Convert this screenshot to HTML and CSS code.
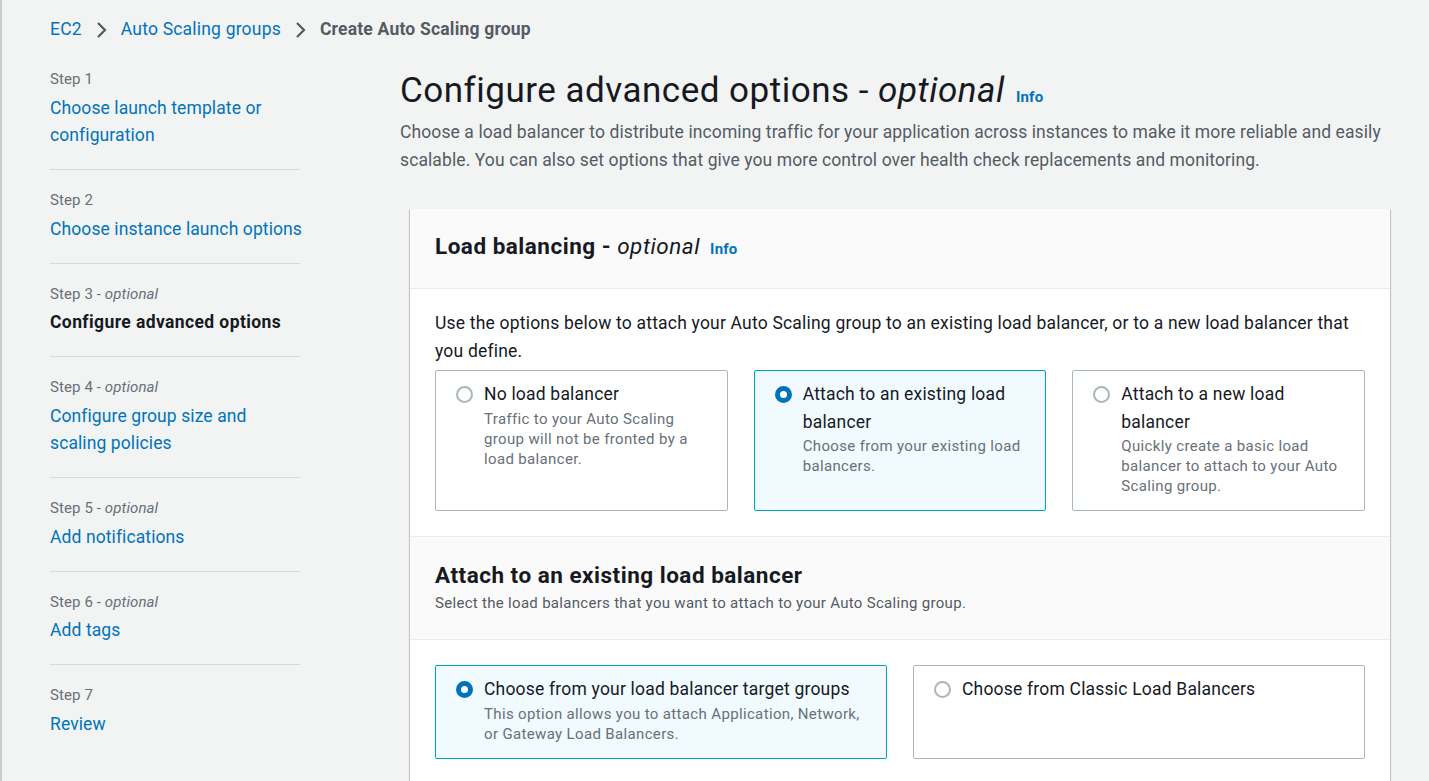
FILE: index.html
```html
<!DOCTYPE html>
<html lang="en">
<head>
<meta charset="utf-8">
<title>Create Auto Scaling group</title>
<link rel="stylesheet" href="styles.css">
</head>
<body>
<div class="page">
  <nav class="breadcrumbs">
    <a class="crumb-link" href="#">EC2</a>
    <svg class="chev" viewBox="0 0 12 18" width="12" height="18"><path d="M3 2l7 7-7 7" fill="none" stroke="#545b64" stroke-width="2.2"/></svg>
    <a class="crumb-link" href="#">Auto Scaling groups</a>
    <svg class="chev" viewBox="0 0 12 18" width="12" height="18"><path d="M3 2l7 7-7 7" fill="none" stroke="#545b64" stroke-width="2.2"/></svg>
    <span class="crumb-current">Create Auto Scaling group</span>
  </nav>

  <div class="layout">
    <ul class="steps">
      <li class="step">
        <div class="step-label">Step 1</div>
        <a class="step-link" href="#">Choose launch template or configuration</a>
      </li>
      <li class="step">
        <div class="step-label">Step 2</div>
        <a class="step-link" href="#">Choose instance launch options</a>
      </li>
      <li class="step">
        <div class="step-label">Step 3 - <i>optional</i></div>
        <span class="step-current">Configure advanced options</span>
      </li>
      <li class="step">
        <div class="step-label">Step 4 - <i>optional</i></div>
        <a class="step-link" href="#">Configure group size and scaling policies</a>
      </li>
      <li class="step">
        <div class="step-label">Step 5 - <i>optional</i></div>
        <a class="step-link" href="#">Add notifications</a>
      </li>
      <li class="step">
        <div class="step-label">Step 6 - <i>optional</i></div>
        <a class="step-link" href="#">Add tags</a>
      </li>
      <li class="step">
        <div class="step-label">Step 7</div>
        <a class="step-link" href="#">Review</a>
      </li>
    </ul>

    <main class="main">
      <h1 class="page-title">Configure advanced options - <i>optional</i> <a class="info" href="#">Info</a></h1>
      <p class="page-desc">Choose a load balancer to distribute incoming traffic for your application across instances to make it more reliable and easily scalable. You can also set options that give you more control over health check replacements and monitoring.</p>

      <section class="card">
        <header class="card-header">
          <h2 class="card-title">Load balancing - <i>optional</i> <a class="info" href="#">Info</a></h2>
        </header>
        <div class="card-body">
          <p class="body-text">Use the options below to attach your Auto Scaling group to an existing load balancer, or to a new load balancer that you define.</p>
          <div class="tiles tiles-3">
            <label class="tile">
              <span class="radio"></span>
              <span class="tile-text">
                <span class="tile-title">No load balancer</span>
                <span class="tile-desc">Traffic to your Auto Scaling group will not be fronted by a load balancer.</span>
              </span>
            </label>
            <label class="tile selected">
              <span class="radio checked"></span>
              <span class="tile-text">
                <span class="tile-title">Attach to an existing load balancer</span>
                <span class="tile-desc">Choose from your existing load balancers.</span>
              </span>
            </label>
            <label class="tile">
              <span class="radio"></span>
              <span class="tile-text">
                <span class="tile-title">Attach to a new load balancer</span>
                <span class="tile-desc">Quickly create a basic load balancer to attach to your Auto Scaling group.</span>
              </span>
            </label>
          </div>
        </div>
        <header class="card-header sub">
          <h2 class="card-title">Attach to an existing load balancer</h2>
          <p class="card-subtitle">Select the load balancers that you want to attach to your Auto Scaling group.</p>
        </header>
        <div class="card-body lower">
          <div class="tiles tiles-2">
            <label class="tile selected">
              <span class="radio checked"></span>
              <span class="tile-text">
                <span class="tile-title">Choose from your load balancer target groups</span>
                <span class="tile-desc">This option allows you to attach Application, Network, or Gateway Load Balancers.</span>
              </span>
            </label>
            <label class="tile">
              <span class="radio"></span>
              <span class="tile-text">
                <span class="tile-title">Choose from Classic Load Balancers</span>
              </span>
            </label>
          </div>
        </div>
      </section>
    </main>
  </div>
</div>
</body>
</html>
```

FILE: styles.css
```css
* { box-sizing: border-box; }
html, body { margin: 0; padding: 0; }
body {
  background: #f2f3f3;
  font-family: "Roboto", "Liberation Sans", sans-serif;
  font-size: 17.5px;
  line-height: 27.5px;
  letter-spacing: 0.2px;
  color: #16191f;
  height: 781px;
  overflow: hidden;
}
a { color: #0073bb; text-decoration: none; }
i { font-style: italic; }

.page {
  border-left: 2px solid #c9cccc;
  min-height: 781px;
  padding: 16px 0 0 48px;
}

.breadcrumbs {
  display: flex;
  align-items: center;
  gap: 13.5px;
  height: 28px;
}
.chev { display: block; }
.crumb-current { color: #545b64; font-weight: 700; }

.layout {
  display: grid;
  grid-template-columns: 250px 990px;
  column-gap: 100px;
  margin-top: 5px;
}

.steps { list-style: none; margin: 0; padding: 0; }
.step {
  padding: 20px 0 19.5px;
  border-bottom: 1px solid #d5dbdb;
  letter-spacing: 0.1px;
}
.step:last-child { border-bottom: none; }
.step-label {
  font-size: 15px;
  line-height: 20px;
  color: #687078;
  margin-bottom: 5.5px;
}
.step-link, .step-current { display: block; margin-right: -4px; }
.step-current { font-weight: 700; letter-spacing: 0.4px; }

.main { padding-top: 20px; }
.page-title {
  margin: 0;
  font-size: 35px;
  line-height: 44px;
  font-weight: 400;
  letter-spacing: 0.5px;
}
.page-title .info { font-size: 15px; font-weight: 700; letter-spacing: 0.2px; margin-left: 2px; line-height: 1; }
.page-desc {
  margin: 6px 0 0;
  color: #545b64;
  letter-spacing: 0.1px;
}

.card {
  margin: 35px 0 0 10px;
  background: #fff;
  box-shadow: 0 1px 1px 0 rgba(0,28,36,.3), 1px 1px 1px 0 rgba(0,28,36,.15), -1px 1px 1px 0 rgba(0,28,36,.15);
}
.card-header {
  background: #fafafa;
  border-bottom: 1px solid #eaeded;
  padding: 20px 25px 24px;
}
.card-header.sub { border-top: 1px solid #eaeded; padding: 21px 25px 26px; }
.card-title {
  margin: 0;
  font-size: 22.5px;
  line-height: 35px;
  font-weight: 700;
  letter-spacing: 0.5px;
}
.card-title i { font-weight: 400; }
.card-title .info { font-size: 15px; font-weight: 700; letter-spacing: 0.2px; margin-left: 4px; line-height: 1; }
.card-subtitle {
  margin: 0;
  font-size: 15px;
  line-height: 20px;
  letter-spacing: 0.3px;
  color: #545b64;
}
.card-body { padding: 21px 25px 25px; }
.card-body.lower { padding-top: 25px; }
.body-text { margin: 0 0 5px; }

.tiles { display: grid; column-gap: 26px; }
.tiles-3 { grid-template-columns: repeat(3, 1fr); }
.tiles-2 { grid-template-columns: repeat(2, 1fr); }

.tile {
  display: flex;
  align-items: flex-start;
  gap: 11px;
  border: 1px solid #aab7b8;
  border-radius: 2px;
  padding: 10px 20px 14px;
  min-height: 94px;
  background: #fff;
}
.tile.selected { border-color: #00a1c9; background: #f1faff; }

.radio {
  flex: none;
  width: 17px;
  height: 17px;
  border-radius: 50%;
  border: 2px solid #aab7b8;
  background: #fff;
  margin-top: 5px;
}
.radio.checked { border: 5.5px solid #0073bb; }

.tile-text { display: flex; flex-direction: column; }
.tile-title { color: #16191f; }
.tile-desc { font-size: 15px; line-height: 20px; letter-spacing: 0.35px; color: #687078; }
```
